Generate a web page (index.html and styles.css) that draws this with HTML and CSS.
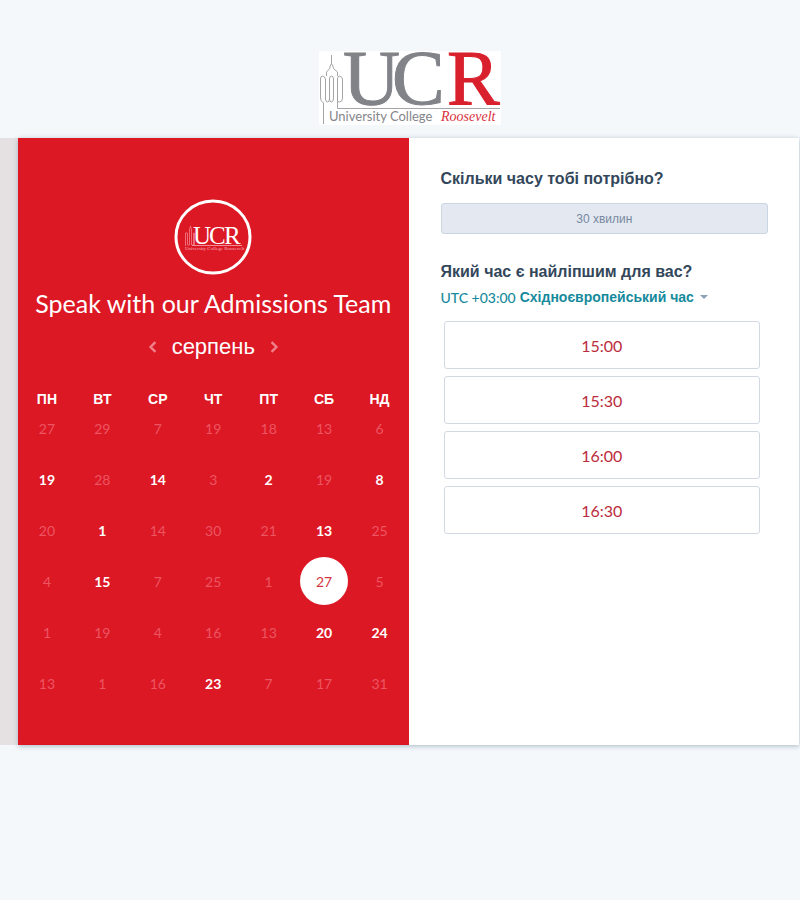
FILE: index.html
```html
<!DOCTYPE html>
<html lang="uk">
<head>
<meta charset="utf-8">
<meta name="viewport" content="width=device-width, initial-scale=1">
<title>Speak with our Admissions Team</title>
<link rel="stylesheet" href="styles.css">
</head>
<body>
<header class="brand">
  <svg class="brand-logo" viewBox="0 0 182 74" role="img" aria-label="University College Roosevelt">
    <rect width="182" height="74" fill="#fff"/>
    <g fill="none" stroke="#a5a5a8" stroke-width="1">
      <path d="M4.500 73V52q-3-2-3-5V28q0-3 2-3t3 3v20q0 3 2 3t2-3M10.500 48V28q0-3 2-3t2 3v19q0 4-2 4t-2-3M18.500 37V57.500H181M18.500 37V28q0-3 2-3t3 3v19q0 4-3 4t-2-3M7.500 25v-4q4-3 4-7l1-1V4v9l1 1q0 4 5 7v4"/>
    </g>
    <g class="serif" font-size="79">
      <text x="24" y="53" fill="#818388" stroke="#818388">U</text>
      <text x="73" y="53" fill="#818388" stroke="#818388">C</text>
      <text x="128" y="53" fill="#d9202d" stroke="#d9202d">R</text>
    </g>
    <text class="sans" x="10" y="70" font-size="13" fill="#85858a">University College</text>
    <text class="serif accent" x="122" y="70" font-size="14" fill="#d9303c">Roosevelt</text>
  </svg>
</header>
<main class="stage">
  <div class="card">
    <section class="calendar">
      <svg class="avatar" viewBox="0 0 78 76" role="img" aria-label="UCR">
        <ellipse cx="39" cy="38" rx="37" ry="36" fill="none" stroke="#fff" stroke-width="3"/>
        <path d="M11.500 47V34h2v12h2V31l1-4 1 4v15h2V34h1v12" fill="none" stroke="#ee6c77" stroke-width="1"/>
        <g class="serif" font-size="25" fill="#fff">
          <text x="19" y="45">U</text>
          <text x="35" y="45">C</text>
          <text x="50" y="45">R</text>
        </g>
        <path d="M18 46.500H68" stroke="#f28d95"/>
        <text class="serif" x="11" y="51" font-size="5" fill="#f7b3b8">University College Roosevelt</text>
      </svg>
      <h1 class="title">Speak with our Admissions Team</h1>
      <div class="month">
        <button class="arrow" type="button" aria-label="Попередній місяць"><svg viewBox="0 0 8 10"><path d="M6 1L2 5l4 4"/></svg></button>
        <h2 class="month-name">серпень</h2>
        <button class="arrow" type="button" aria-label="Наступний місяць"><svg viewBox="0 0 8 10"><path d="M2 1l4 4-4 4"/></svg></button>
      </div>
      <table class="days">
        <thead>
          <tr><th>ПН</th><th>ВТ</th><th>СР</th><th>ЧТ</th><th>ПТ</th><th>СБ</th><th>НД</th></tr>
        </thead>
        <tbody>
          <tr><td><button disabled>27</button></td><td><button disabled>29</button></td><td><button disabled>7</button></td><td><button disabled>19</button></td><td><button disabled>18</button></td><td><button disabled>13</button></td><td><button disabled>6</button></td></tr>
          <tr><td><button>19</button></td><td><button disabled>28</button></td><td><button>14</button></td><td><button disabled>3</button></td><td><button>2</button></td><td><button disabled>19</button></td><td><button>8</button></td></tr>
          <tr><td><button disabled>20</button></td><td><button>1</button></td><td><button disabled>14</button></td><td><button disabled>30</button></td><td><button disabled>21</button></td><td><button>13</button></td><td><button disabled>25</button></td></tr>
          <tr><td><button disabled>4</button></td><td><button>15</button></td><td><button disabled>7</button></td><td><button disabled>25</button></td><td><button disabled>1</button></td><td><button class="selected" aria-pressed="true">27</button></td><td><button disabled>5</button></td></tr>
          <tr><td><button disabled>1</button></td><td><button disabled>19</button></td><td><button disabled>4</button></td><td><button disabled>16</button></td><td><button disabled>13</button></td><td><button>20</button></td><td><button>24</button></td></tr>
          <tr><td><button disabled>13</button></td><td><button disabled>1</button></td><td><button disabled>16</button></td><td><button>23</button></td><td><button disabled>7</button></td><td><button disabled>17</button></td><td><button disabled>31</button></td></tr>
        </tbody>
      </table>
    </section>
    <section class="options">
      <h2 class="question">Скільки часу тобі потрібно?</h2>
      <button class="duration" type="button">30 хвилин</button>
      <h2 class="question">Який час є найліпшим для вас?</h2>
      <button class="zone" type="button"><span class="zone-utc">UTC +03:00</span> Східноєвропейський час <span class="caret"></span></button>
      <div class="slots">
        <button class="slot" type="button">15:00</button>
        <button class="slot" type="button">15:30</button>
        <button class="slot" type="button">16:00</button>
        <button class="slot" type="button">16:30</button>
      </div>
    </section>
  </div>
</main>
</body>
</html>
```
FILE: styles.css
```css
* { box-sizing: border-box; }

body {
  margin: 0;
  min-height: 100vh;
  background: #f4f8fb;
  font-family: Lato, "Liberation Sans", sans-serif;
  color: #33475b;
}

button {
  margin: 0;
  padding: 0;
  border: 0;
  background: none;
  color: inherit;
  font: inherit;
  cursor: pointer;
}

h1, h2 { margin: 0; }

.brand {
  display: flex;
  justify-content: center;
  padding: 51px 0 13px 20px;
}

.brand-logo {
  width: 182px;
  height: 74px;
  overflow: visible;
}

.serif { font-family: "Liberation Serif", serif; }
.sans { font-family: Lato, sans-serif; }
.accent { font-style: italic; }

.stage {
  padding: 0 1px 0 18px;
  background: linear-gradient(to right, #e5e1e2 18px, transparent 18px);
}

.card {
  display: grid;
  grid-template-columns: 1fr 1fr;
  background: #fff;
  box-shadow: 0 1px 5px #a9b7c4;
}

.calendar {
  display: flex;
  flex-direction: column;
  align-items: center;
  padding: 61px 0 23px;
  background: #dc1825;
  color: #fff;
}

.avatar { width: 78px; height: 76px; }

.title {
  margin-top: 12px;
  font-size: 25px;
  font-weight: 400;
  line-height: 32px;
  white-space: nowrap;
}

.month {
  display: flex;
  align-items: center;
  gap: 14px;
  margin-top: 12px;
}

.month-name {
  font: 400 22px/32px "Liberation Sans", sans-serif;
}

.arrow {
  display: flex;
  width: 10px;
  height: 12px;
}

.arrow svg {
  width: 10px;
  height: 12px;
  fill: none;
  stroke: #f0808a;
  stroke-width: 2;
}

.days {
  width: 388px;
  max-width: 100%;
  margin-top: 20px;
  border-collapse: collapse;
  table-layout: fixed;
  text-align: center;
}

.days th {
  height: 33px;
  padding: 0;
  font: 700 14px/32px "Liberation Sans", sans-serif;
  vertical-align: top;
}

.days td {
  height: 51px;
  padding: 0;
  font-size: 14px;
  vertical-align: top;
}

.days button {
  display: block;
  width: 48px;
  height: 24px;
  margin: 0 auto;
  font-weight: 700;
}

.days button:disabled {
  color: #ec5561;
  font-weight: 400;
}

.days .selected {
  height: 48px;
  margin: -12px auto;
  border-radius: 50%;
  background: #fff;
  color: #d33642;
  font-weight: 400;
}

.options { padding: 29px 31px 28px 32px; }

.question {
  font: 700 16px/24px "Liberation Sans", sans-serif;
}

.duration {
  display: block;
  width: 100%;
  height: 31px;
  margin: 12px 0 26px;
  border: 1px solid #cbd6e2;
  border-radius: 3px;
  background: #e4e9f1;
  color: #7788a0;
  font: 12px "Liberation Sans", sans-serif;
}

.zone {
  display: flex;
  align-items: center;
  gap: 4px;
  height: 26px;
  color: #168a9c;
  font: 700 14px "Liberation Sans", sans-serif;
  white-space: nowrap;
}

.zone-utc { font: 500 14px Lato, sans-serif; }

.caret {
  margin-left: 2px;
  border: 4px solid transparent;
  border-top-color: #8aa0b4;
  border-bottom: 0;
}

.slots {
  display: grid;
  gap: 7px;
  margin-top: 11px;
  padding: 0 8px 0 3px;
}

.slot {
  height: 48px;
  border: 1px solid #d3d9e2;
  border-radius: 3px;
  background: #fff;
  color: #bb2c3d;
  font-size: 16px;
}
```
